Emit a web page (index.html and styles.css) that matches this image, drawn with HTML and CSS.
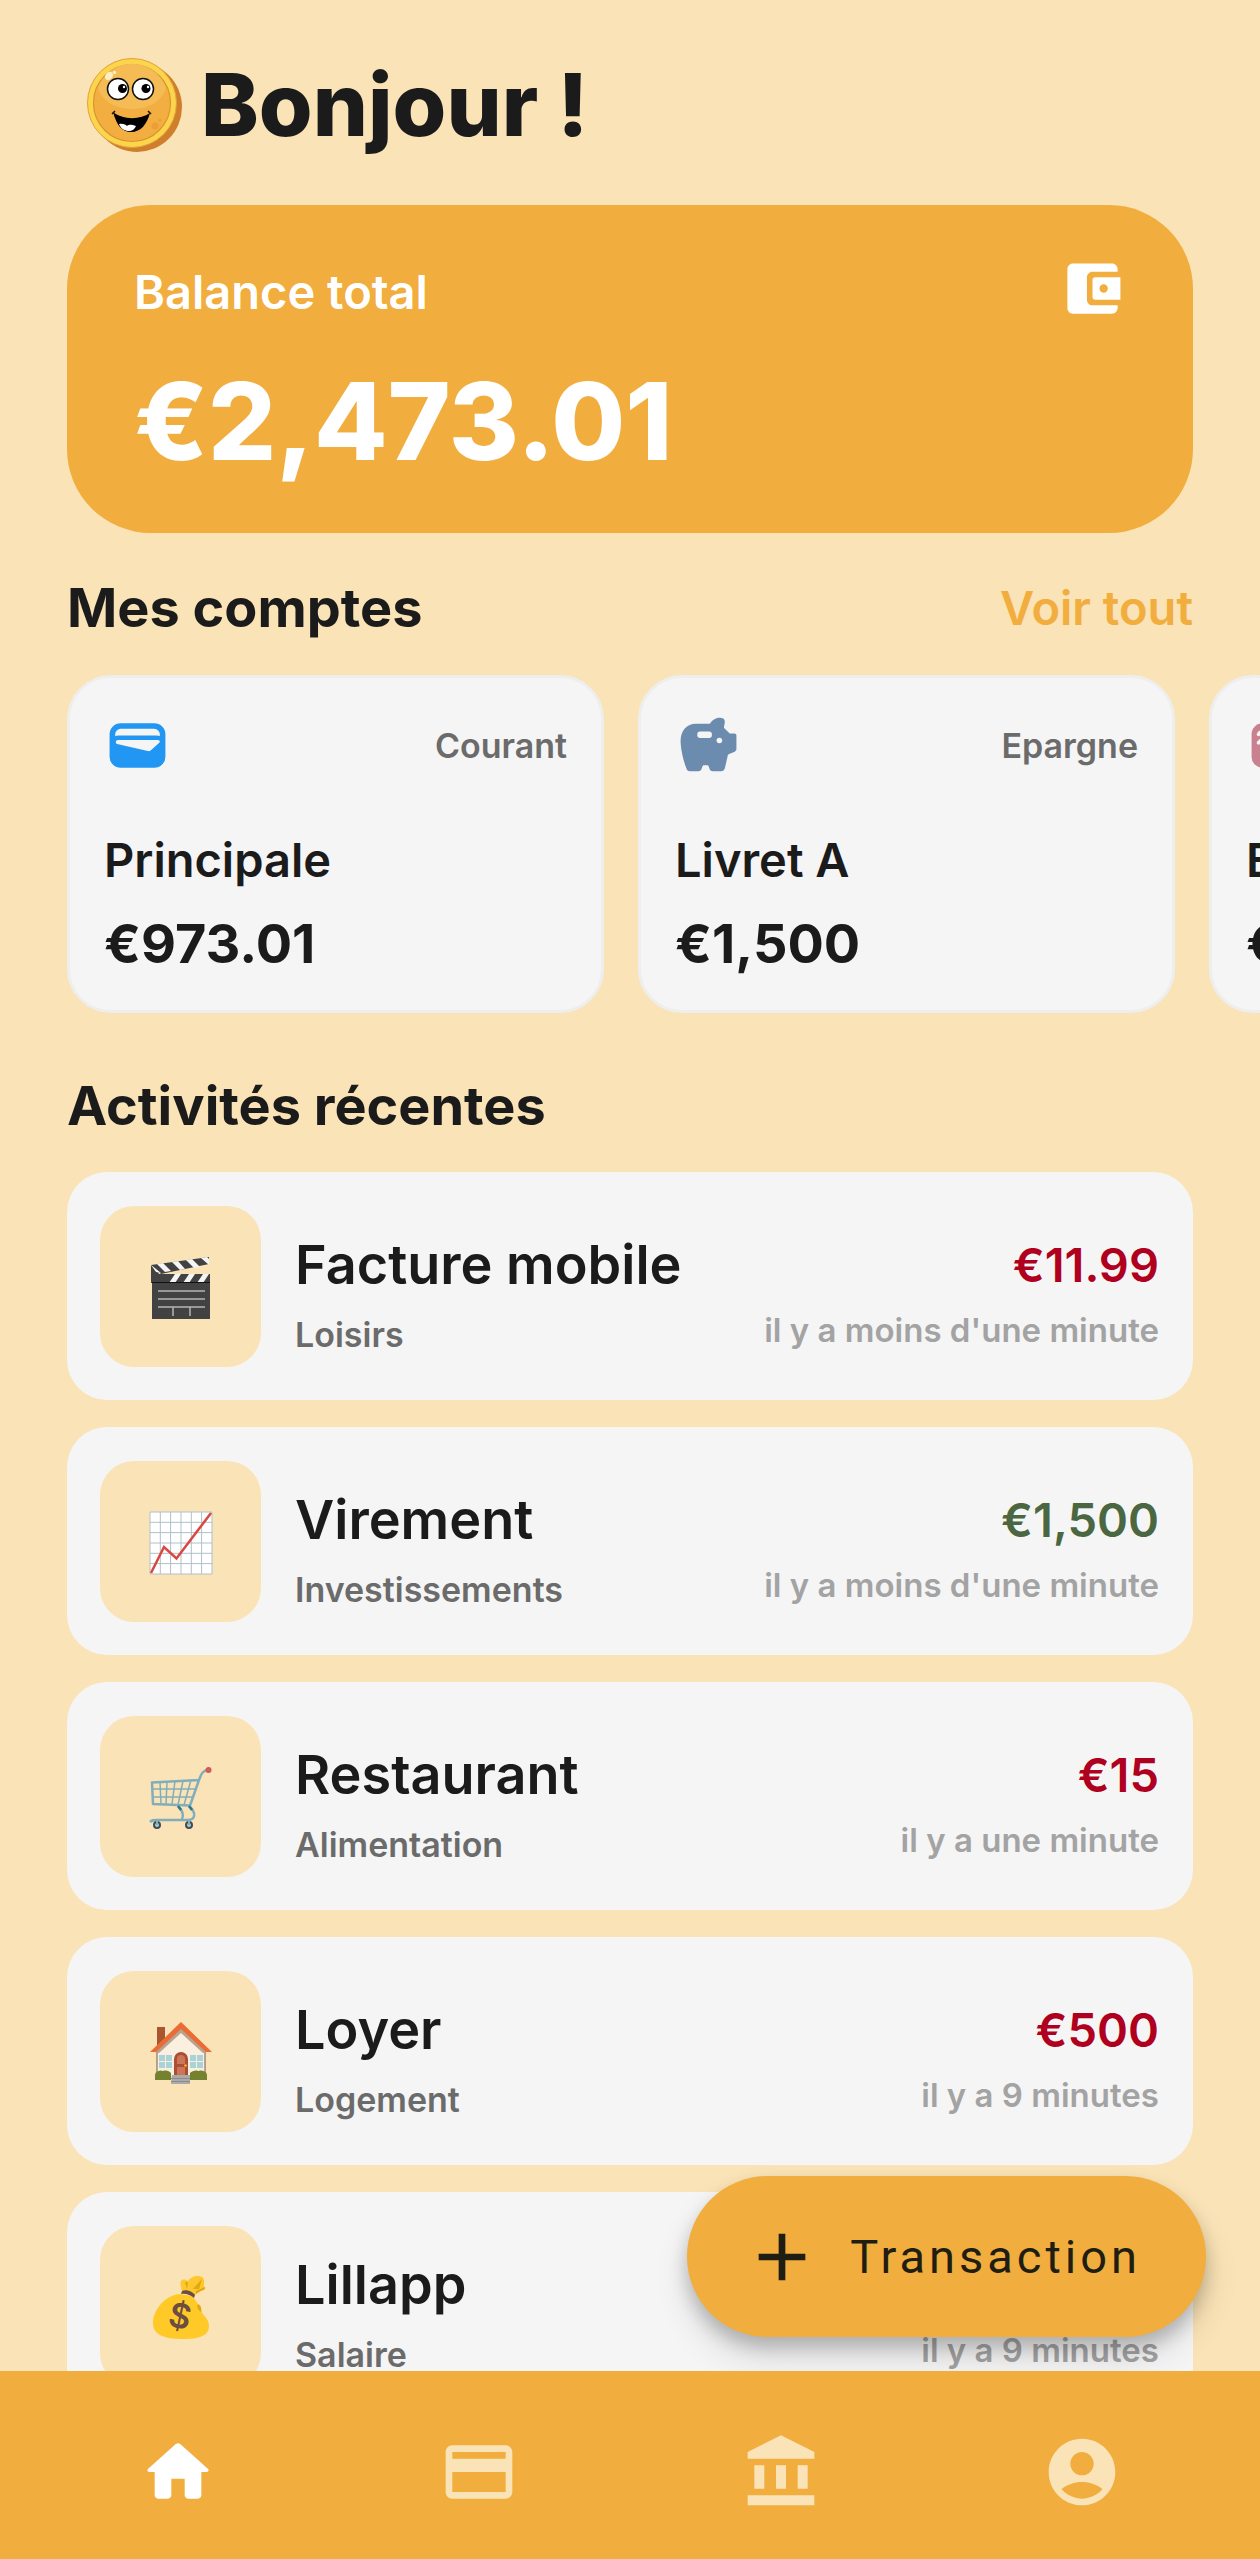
FILE: index.html
```html
<!DOCTYPE html>
<html lang="fr">
	<head>
		<meta charset="utf-8">
		<meta name="viewport" content="width=device-width, initial-scale=1">
		<title>Bonjour !</title>
		<link rel="stylesheet" href="styles.css">
	</head>
	<body>
		<div class="app">
			<main class="content">
				<header class="hello">
					<svg class="coin" viewBox="0 0 96 96" aria-hidden="true">
						<circle cx="50" cy="50" r="45" fill="#cf7f2b"/>
						<circle cx="45" cy="46" r="44.5" fill="#fbd54c" stroke="#e3a03a"/>
						<circle cx="45" cy="46" r="38.5" fill="#f2ae40" stroke="#dc9330" stroke-width="1.2"/>
						<path d="M11 31a36 36 0 0 1 68 0c-8 28-60 28-68 0z" fill="#f5bb55"/>
						<ellipse cx="22" cy="19" rx="3.5" ry="4.5" fill="#fdecc4" transform="rotate(40 22 19)"/>
						<circle cx="27.500" cy="15.500" r="1.800" fill="#fdecc4"/>
						<circle cx="68" cy="69" r="3.500" fill="#ec9f36"/>
						<circle cx="73" cy="63" r="1.500" fill="#ec9f36"/>
						<circle cx="31" cy="32" r="10.500" fill="#fff" stroke="#111" stroke-width="1.500"/>
						<circle cx="56" cy="32" r="10.500" fill="#fff" stroke="#111" stroke-width="1.500"/>
						<circle cx="35.500" cy="31.500" r="4.500"/>
						<circle cx="59" cy="31.500" r="4.500"/>
						<circle cx="37" cy="30" r="1.200" fill="#fff"/>
						<circle cx="61" cy="30" r="1.200" fill="#fff"/>
						<path d="M26 55c10 8 27 8 37 1-3 11-9 19-19 19-9 0-14-6-18-20z"/>
						<path d="M25 57c1-1 2-2 3-3M61 54c1 1 2 2 3 3" fill="none" stroke="#111" stroke-width="1.500"/>
						<path d="M32 67c4-1 7 1 8 2 3-2 5-1 9 0-1 3-4 5-7 5-4 0-8-2-10-7z" fill="#fff"/>
					</svg>
					<h1>Bonjour !</h1>
				</header>

				<section class="balance">
					<div class="balance_top">
						<span>Balance total</span>
						<svg class="icon" viewBox="0 0 24 24" fill="currentColor" aria-hidden="true"><path d="M21 18v1c0 1.100-.9 2-2 2H5c-1.110 0-2-.9-2-2V5c0-1.100.89-2 2-2h14c1.100 0 2 .9 2 2v1h-9c-1.110 0-2 .9-2 2v8c0 1.100.89 2 2 2h9z"/><path fill-rule="evenodd" d="M22 8v8h-9a1 1 0 0 1-1-1V9a1 1 0 0 1 1-1zM16 10.500a1.500 1.500 0 1 0 0 3 1.500 1.500 0 0 0 0-3z"/></svg>
					</div>
					<p class="total">€2,473.01</p>
				</section>

				<div class="section_head">
					<h2>Mes comptes</h2>
					<a href="#comptes">Voir tout</a>
				</div>
				<section class="accounts" id="comptes">
					<article class="account">
						<div class="account_top">
							<svg class="icon" viewBox="0 0 24 24" aria-hidden="true">
								<rect x="2" y="4" width="20" height="16" rx="4" fill="#2196f3"/>
								<path d="M4 8.600V8a2 2 0 0 1 2-2h12a2 2 0 0 1 2 2v.6a3 3 0 0 0-1.200-.2H5.200A3 3 0 0 0 4 8.600zM5 10h14c1 0 1.300.6.7 1.100l-3 2.700c-.3.300-.6.300-1 .2L4.700 11.500C4 11.300 4.100 10 5 10z" fill="#f5f5f5"/>
							</svg>
							<span class="type">Courant</span>
						</div>
						<h3>Principale</h3>
						<p class="sum">€973.01</p>
					</article>
					<article class="account">
						<div class="account_top">
							<svg class="icon" viewBox="0 0 24 24" aria-hidden="true">
								<path d="M2 10.400C2 6.600 4.200 4.200 7.500 4.200h5C13.300 3 14.500 2.100 16 2.100c1.500 0 2 .7 1.800 1.800l-.3 1.700 2 2c.1.100.2.100.4.100h1.300c.6 0 .8.300.8.8v4.700c0 .6-.2.800-.6 1l-2 .8c-.3.100-.4.300-.5.600l-1 4.400c-.2.800-.6 1.200-1.300 1.200h-3c-.6 0-1-.2-1.200-.8l-.3-.8c-.1-.4-.3-.5-.7-.5h-.9c-.4 0-.6.1-.7.5l-.3.800c-.2.600-.6.800-1.200.8h-3c-.7 0-1.100-.4-1.300-1.200C2.700 16.500 2 12.500 2 10.400z" fill="#6b8cae"/>
								<rect x="8" y="7" width="5.200" height="2.300" rx="1" fill="#f5f5f5"/>
								<circle cx="15.900" cy="10.200" r="1" fill="#f5f5f5"/>
							</svg>
							<span class="type">Epargne</span>
						</div>
						<h3>Livret A</h3>
						<p class="sum">€1,500</p>
					</article>
					<article class="account">
						<div class="account_top">
							<svg class="icon" viewBox="0 0 24 24" aria-hidden="true">
								<rect x="2" y="4" width="20" height="16" rx="4" fill="#c9808f"/>
								<path d="M4.500 8c.3-.9 1.500-1.200 2-.3M4.500 11l2-2" fill="none" stroke="#f5f5f5" stroke-width="1.300" stroke-linecap="round"/>
							</svg>
						</div>
						<h3>E</h3>
						<p class="sum">€0</p>
					</article>
				</section>

				<div class="section_head recent">
					<h2>Activités récentes</h2>
				</div>
				<ul class="activities">
					<li>
						<div class="tile">
							<svg viewBox="0 0 64 64" aria-hidden="true">
								<path d="M3 27h58v36H3z" fill="#424242"/>
								<path d="M2 9l8 8-6 10H2z" fill="#424242"/>
								<path d="M2 9l58-8v7L12 18z" fill="#424242"/>
								<path d="M3 18h58v9H3z" fill="#424242"/>
								<path d="M8 8l6-1 8 8-6 1zM23 6l6-1 7 8-5 1zM37 4l6-1 8 8-6 1zM52 2l6-1 2 2v6z" fill="#f5f5f5"/>
								<path d="M26 18h6l-6 9h-6zM40 18h6l-6 9h-6zM54 18h6l-6 9h-6z" fill="#f5f5f5"/>
								<path d="M2 9l10 8-5-1z" fill="#f5f5f5"/>
								<path d="M3 26.500h58" stroke="#111"/>
								<path d="M9 35h47M9 43h47M9 51h47M24 51v9M41 51v9" stroke="#b5b5b5" stroke-width="1.500"/>
							</svg>
						</div>
						<div class="info">
							<h3>Facture mobile</h3>
							<p>Loisirs</p>
						</div>
						<div class="amount">
							<strong class="debit">€11.99</strong>
							<time>il y a moins d'une minute</time>
						</div>
					</li>
					<li>
						<div class="tile">
							<svg viewBox="0 0 64 64" aria-hidden="true">
								<path d="M1 1h62v62H1z" fill="#fff"/>
								<path d="M1 1h62v62H1zM1 11.300h62M1 21.600h62M1 32h62M1 42.300h62M1 52.600h62M11.300 1v62M21.600 1v62M32 1v62M42.300 1v62M52.600 1v62" fill="none" stroke="#b0c0c8"/>
								<path d="M2 62l13-26 12.500 11.500L62 2" fill="none" stroke="#db4641" stroke-width="2.500"/>
							</svg>
						</div>
						<div class="info">
							<h3>Virement</h3>
							<p>Investissements</p>
						</div>
						<div class="amount">
							<strong class="credit">€1,500</strong>
							<time>il y a moins d'une minute</time>
						</div>
					</li>
					<li>
						<div class="tile">
							<svg viewBox="0 0 64 64" fill="none" aria-hidden="true">
								<path d="M11 16l1 22M18 16l-1 22M26 15l-3 23M34 15l-5 24M42 14l-7 25M4 23h43M4 31h40" stroke="#82aebb" stroke-width="1.500"/>
								<path d="M59 4c-7 1-7 6-9 10L3 16.500 4 38l37 1.500L50 14" stroke="#82aebb" stroke-width="2.500" stroke-linejoin="round"/>
								<path d="M29 40c4 4 6 9 4 13M40 40c8 7 6 14-1 14H8c-4 0-5 0-7 2" stroke="#82aebb" stroke-width="2.500"/>
								<path d="M29 40l3 4M40 40l3 4" stroke="#2f7889" stroke-width="2.500"/>
								<circle cx="8" cy="59" r="3" fill="#9fd2df" stroke="#424b50" stroke-width="2"/>
								<circle cx="40" cy="59" r="3" fill="#9fd2df" stroke="#424b50" stroke-width="2"/>
								<path d="M8 54v5M40 54v5" stroke="#82aebb" stroke-width="2"/>
								<circle cx="59.500" cy="4" r="2.300" fill="#9a7782" stroke="#e8504a" stroke-width="1.500"/>
							</svg>
						</div>
						<div class="info">
							<h3>Restaurant</h3>
							<p>Alimentation</p>
						</div>
						<div class="amount">
							<strong class="debit">€15</strong>
							<time>il y a une minute</time>
						</div>
					</li>
					<li>
						<div class="tile">
							<svg viewBox="0 0 64 64" aria-hidden="true">
								<path d="M8 6h8v16l-8 8z" fill="#a9552f"/>
								<path d="M8 27L32 7l24 20v28H8z" fill="#fbf0df"/>
								<path d="M8 31v22M56 31v22" stroke="#6d5b50"/>
								<path d="M6 31L32 7l26 24-4 1-22-20L10 32z" fill="#b8a290"/>
								<path d="M32 1l31 30H57L32 8 7 31H1z" fill="#ea6b33"/>
								<path d="M10 34h13v13H10zM41 34h13v13H41z" fill="#a9d3d7"/>
								<path d="M16.500 34v13M47.500 34v13M10 40.500h13M41 40.500h13" stroke="#fbf0df"/>
								<path d="M25 54V38a6.500 6.500 0 0 1 14 0v16z" fill="#a84f35"/>
								<path d="M28 43v-5a4 4 0 0 1 8 0v5zM28 46h8v8h-8z" fill="#cf7557"/>
								<circle cx="36.500" cy="44.500" r="1.300" fill="#ffb820"/>
								<path d="M6 59v-5c0-2 2-4 4-4 2-1 3 0 4 0 4-1 6 0 8 2v7zM41 59v-7c2-2 6-3 8-2 1 0 3-1 5 0 2 0 4 2 4 4v5z" fill="#74822f"/>
								<path d="M23 54h18v9H22z" fill="#aaa"/>
								<path d="M22 57.500h19M22 60.500h19" stroke="#8c8c8c"/>
							</svg>
						</div>
						<div class="info">
							<h3>Loyer</h3>
							<p>Logement</p>
						</div>
						<div class="amount">
							<strong class="debit">€500</strong>
							<time>il y a 9 minutes</time>
						</div>
					</li>
					<li>
						<div class="tile">
							<svg viewBox="0 0 64 64" aria-hidden="true">
								<path d="M33 15c-1-4-3-9 0-11 2-1 4 0 6 1 3-5 12-7 15-3 3 5-1 5 2 10 1 3-5 2-10 7z" fill="#fdc72d"/>
								<path d="M44 13l9-10-3 10zM47 15l9-4c1 3-5 3-9 7zM39 6l-1 7-2-7z" fill="#e2a610"/>
								<path d="M31 18C16 19 4 34 4 47c0 12 11 16 30 16 16 0 26-3 26-13 0-8-7-11-9-17-2-7-6-10-8-13z" fill="#ffca28"/>
								<path d="M49 28c5 3 2 5 4 8-3-1-6-4-4-8z" fill="#e2a610"/>
								<path d="M33 15c5-2 11 1 13 4l-1 3c-3-3-9-5-13-4z" fill="#6d4c41"/>
								<text class="dollar" x="31" y="52" text-anchor="middle" transform="rotate(12 31 40)">$</text>
							</svg>
						</div>
						<div class="info">
							<h3>Lillapp</h3>
							<p>Salaire</p>
						</div>
						<div class="amount">
							<strong class="credit">&nbsp;</strong>
							<time>il y a 9 minutes</time>
						</div>
					</li>
				</ul>
			</main>

			<div class="bottom">
				<button type="button" class="add">
					<svg viewBox="0 0 24 24" fill="currentColor" aria-hidden="true"><path d="M19 13h-6v6h-2v-6H5v-2h6V5h2v6h6z"/></svg>
					Transaction
				</button>
				<nav class="tabs">
					<a href="#accueil" class="active" aria-label="Accueil">
						<svg viewBox="0 0 24 24" fill="currentColor" aria-hidden="true"><path d="M10 19v-5h4v5c0 .55.45 1 1 1h3c.55 0 1-.45 1-1v-7h1.700c.46 0 .68-.57.33-.87L12.670 3.600c-.38-.34-.96-.34-1.340 0l-8.360 7.530c-.34.3-.13.87.33.87H5v7c0 .55.45 1 1 1h3c.55 0 1-.45 1-1z"/></svg>
					</a>
					<a href="#cartes" aria-label="Cartes">
						<svg viewBox="0 0 24 24" fill="currentColor" aria-hidden="true"><path d="M20 4H4c-1.110 0-2 .89-2 2v12c0 1.110.89 2 2 2h16c1.110 0 2-.89 2-2V6c0-1.110-.89-2-2-2zm0 14H4v-6h16v6zm0-10H4V6h16v2z"/></svg>
					</a>
					<a href="#banque" aria-label="Banque">
						<svg viewBox="0 0 24 24" fill="currentColor" aria-hidden="true"><path d="M4 10v7h3v-7H4zm6.500 0v7h3v-7h-3zM2 22h20v-3H2v3zm15-12v7h3v-7h-3zM12 1L2 6v2h20V6L12 1z"/></svg>
					</a>
					<a href="#profil" aria-label="Profil">
						<svg viewBox="0 0 24 24" fill="currentColor" aria-hidden="true"><path d="M12 2C6.480 2 2 6.480 2 12s4.480 10 10 10 10-4.480 10-10S17.520 2 12 2zm0 4c1.930 0 3.500 1.570 3.500 3.500S13.930 13 12 13s-3.500-1.570-3.500-3.500S10.070 6 12 6zm0 14c-2.030 0-4.430-.82-6.140-2.880C7.550 15.800 9.680 15 12 15s4.450.8 6.140 2.120C16.430 19.180 14.030 20 12 20z"/></svg>
					</a>
				</nav>
			</div>
		</div>
	</body>
</html>
```
FILE: styles.css
```css
* {
	box-sizing: border-box;
}
body {
	margin: 0;
	background-color: #fae3b6;
	color: #1b1b1b;
	font-family: Inter, "Liberation Sans", sans-serif;
}
h1, h2, h3, p, ul {
	margin: 0;
	padding: 0;
}
a {
	text-decoration: none;
}
svg {
	display: block;
	flex: none;
}

.app {
	display: flex;
	flex-direction: column;
	height: 100vh;
}
.content {
	flex: 1;
	min-height: 0;
	padding: 52px 67px 0;
	overflow-x: hidden;
	overflow-y: auto;
	scrollbar-width: none;
}
.icon {
	width: 67px;
	height: 67px;
}

/* header */
.hello {
	display: flex;
	align-items: center;
	gap: 18px;
	padding-left: 20px;
}
.hello h1 {
	font-size: 87px;
	line-height: 106px;
	font-weight: 800;
}
.coin {
	width: 96px;
	height: 96px;
}

/* balance card */
.balance {
	margin-top: 47px;
	padding: 50px 67px 47px;
	border-radius: 84px;
	background-color: #f1ad3d;
	color: #fff;
}
.balance_top {
	display: flex;
	justify-content: space-between;
	align-items: flex-end;
	font-size: 47px;
	line-height: 60px;
	font-weight: 600;
}
.total {
	margin-top: 34px;
	font-size: 107px;
	line-height: 130px;
	font-weight: 800;
}

/* accounts */
.section_head {
	display: flex;
	justify-content: space-between;
	align-items: center;
	margin: 42px 0 35px;
}
.section_head.recent {
	margin: 60px 0 34px;
}
.section_head h2 {
	font-size: 54px;
	line-height: 65px;
	font-weight: 700;
}
.section_head a {
	color: #f1ad3d;
	font-size: 47px;
	line-height: 65px;
	font-weight: 600;
}
.accounts {
	display: flex;
	gap: 34px;
	margin-right: -67px;
	overflow-x: auto;
	scrollbar-width: none;
}
.account {
	flex: none;
	width: 537px;
	padding: 34px;
	border: 3px solid #eee;
	border-radius: 44px;
	background-color: #f5f5f5;
}
.account_top {
	display: flex;
	justify-content: space-between;
	align-items: center;
}
.type {
	color: #6b6b6b;
	font-size: 34px;
	line-height: 41px;
	font-weight: 600;
}
.account h3 {
	margin-top: 52px;
	font-size: 47px;
	line-height: 57px;
	font-weight: 600;
}
.sum {
	margin-top: 23px;
	font-size: 54px;
	line-height: 65px;
	font-weight: 700;
}

/* recent activity */
.activities {
	display: flex;
	flex-direction: column;
	gap: 27px;
	list-style: none;
}
.activities li {
	display: flex;
	align-items: center;
	gap: 34px;
	padding: 34px 34px 33px 33px;
	border-radius: 40px;
	background-color: #f5f5f5;
}
.tile {
	display: flex;
	align-items: center;
	justify-content: center;
	width: 161px;
	height: 161px;
	padding-top: 2px;
	border-radius: 34px;
	background-color: #fae3b6;
}
.tile svg {
	width: 64px;
	height: 64px;
}
.dollar {
	fill: #6d4c41;
	font-size: 34px;
	font-weight: 600;
}
.info {
	flex: 1;
	padding-top: 14px;
}
.info h3 {
	font-size: 54px;
	line-height: 65px;
	font-weight: 600;
}
.info p {
	margin-top: 17px;
	color: #6b6b6b;
	font-size: 34px;
	line-height: 41px;
	font-weight: 600;
}
.amount {
	display: flex;
	flex-direction: column;
	gap: 17px;
	padding-top: 13px;
	text-align: right;
}
.amount strong {
	font-size: 47px;
	line-height: 57px;
	font-weight: 600;
}
.amount time {
	color: #a3a3a3;
	font-size: 33px;
	line-height: 41px;
	font-weight: 600;
}
.debit {
	color: #b00020;
}
.credit {
	color: #4a6741;
}

/* bottom bar with the floating button above it */
.bottom {
	position: relative;
}
.add {
	position: absolute;
	right: 54px;
	bottom: 100%;
	display: flex;
	align-items: center;
	gap: 28px;
	height: 161px;
	margin-bottom: 34px;
	padding: 0 65px 0 55px;
	border: 0;
	border-radius: 81px;
	background-color: #f1ad3d;
	color: #201d12;
	font-family: Roboto, sans-serif;
	font-size: 47px;
	letter-spacing: 4px;
	box-shadow: 0 10px 17px rgba(0, 0, 0, .2), 0 20px 34px rgba(0, 0, 0, .12);
}
.add svg {
	width: 80px;
	height: 80px;
}
.tabs {
	position: relative;
	display: flex;
	padding: 61px 27px 47px;
	background-color: #f1ad3d;
}
.tabs a {
	display: flex;
	flex: 1;
	justify-content: center;
	color: #fae3b6;
}
.tabs a.active {
	color: #fff;
}
.tabs svg {
	width: 80px;
	height: 80px;
}
```
